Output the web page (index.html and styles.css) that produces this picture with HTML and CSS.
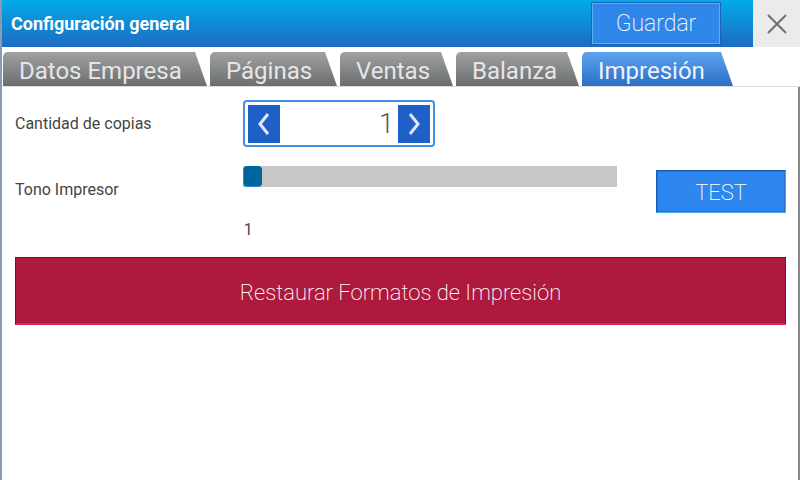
FILE: index.html
```html
<!DOCTYPE html>
<html lang="es">
<head>
<meta charset="utf-8">
<title>Configuración general</title>
<link rel="stylesheet" href="styles.css">
</head>
<body>
<div class="app">
  <header class="header">
    <div class="titlebar">
      <h1 class="title">Configuración general</h1>
      <button class="btn-save">Guardar</button>
    </div>
    <button class="btn-close" aria-label="Cerrar">
      <svg width="20" height="20" viewBox="0 0 20 20"><path d="M1 1 L19 19 M19 1 L1 19" stroke="#707070" stroke-width="2" fill="none"/></svg>
    </button>
  </header>
  <nav class="tabs">
    <div class="tab tab-1">Datos Empresa</div>
    <div class="tab tab-2">Páginas</div>
    <div class="tab tab-3">Ventas</div>
    <div class="tab tab-4">Balanza</div>
    <div class="tab tab-5 active">Impresión</div>
  </nav>
  <main class="content">
    <div class="row row-copies">
      <div class="label">Cantidad de copias</div>
      <div class="spinner">
        <button class="spin-btn" aria-label="Menos">
          <svg width="14" height="24" viewBox="0 0 14 24"><path d="M11 2 L3 12 L11 22" stroke="#e4e8f4" stroke-width="3" fill="none"/></svg>
        </button>
        <div class="spin-value">1</div>
        <button class="spin-btn" aria-label="Más">
          <svg width="14" height="24" viewBox="0 0 14 24"><path d="M3 2 L11 12 L3 22" stroke="#e4e8f4" stroke-width="3" fill="none"/></svg>
        </button>
      </div>
    </div>
    <div class="row row-tone">
      <div class="label label-tone">Tono Impresor</div>
      <div class="tone-col">
        <div class="slider"><div class="thumb"></div></div>
        <div class="tone-value">1</div>
      </div>
      <button class="btn-test">TEST</button>
    </div>
    <button class="btn-restore">Restaurar Formatos de Impresión</button>
  </main>
</div>
</body>
</html>
```
FILE: styles.css
```css
* { box-sizing: border-box; }
html, body { margin: 0; padding: 0; }
body {
  width: 800px;
  height: 480px;
  overflow: hidden;
  background: #ffffff;
  font-family: Roboto, "Liberation Sans", sans-serif;
}
button { font-family: inherit; cursor: pointer; }
.app {
  height: 480px;
  border-left: 2px solid #8a9bb0;
  display: flex;
  flex-direction: column;
}
.header {
  display: flex;
  height: 47px;
}
.titlebar {
  flex: 1;
  display: flex;
  align-items: center;
  justify-content: space-between;
  padding-left: 9px;
  padding-right: 32px;
  background: linear-gradient(#00aaea, #1e6bc1);
}
.title {
  margin: 0;
  color: #ffffff;
  font-size: 18px;
  font-weight: 700;
}
.btn-save {
  width: 130px;
  height: 43px;
  background: #2f87ea;
  border: 1px solid #1d63b8;
  box-shadow: 0 0 0 1px #52b4f2 inset;
  color: #ffffff;
  font-size: 23px;
  font-weight: 200;
  padding: 0;
}
.btn-close {
  width: 47px;
  border: 0;
  background: #ebebeb;
  display: flex;
  align-items: center;
  justify-content: center;
  padding: 0;
}
.tabs {
  display: flex;
  margin-top: 5px;
  height: 35px;
  padding-left: 1px;
  gap: 3px;
  border-bottom: 1px solid #dedede;
}
.tab {
  height: 34px;
  padding: 4px 0 0 16px;
  color: #e6e6e6;
  font-size: 24px;
  line-height: 30px;
  background: linear-gradient(#a0a0a0, #6a6e70);
  border-radius: 5px 6px 0 0;
  clip-path: polygon(0 0, calc(100% - 12px) 0, 100% 100%, 0 100%);
  white-space: nowrap;
}
.tab-1 { width: 204px; }
.tab-2 { width: 127px; }
.tab-3 { width: 113px; }
.tab-4 { width: 123px; }
.tab-5 { width: 151px; }
.tab.active {
  background: linear-gradient(#5ea3ef, #2a6fc7);
  color: #eef2fa;
}
.content {
  flex: 1;
  border-right: 2px solid #888888;
  padding: 13px 12px 0 13px;
  display: flex;
  flex-direction: column;
}
.row {
  display: flex;
}
.label {
  width: 228px;
  font-size: 16px;
  color: #444444;
  align-self: center;
}
.spinner {
  width: 192px;
  height: 47px;
  border: 2px solid #3f8fe6;
  border-radius: 4px;
  padding: 2px 3px;
  display: flex;
  align-items: center;
}
.spin-btn {
  width: 32px;
  height: 38px;
  border: 0;
  padding: 0;
  background: #1f5fc8;
  display: flex;
  align-items: center;
  justify-content: center;
}
.spin-value {
  flex: 1;
  text-align: right;
  padding-right: 4px;
  font-size: 27px;
  font-weight: 300;
  color: #555555;
}
.row-tone {
  margin-top: 19px;
  align-items: flex-start;
}
.label-tone {
  align-self: flex-start;
  margin-top: 14px;
}
.tone-col {
  width: 375px;
  display: flex;
  flex-direction: column;
}
.slider {
  height: 21px;
  background: #c6c7c6;
}
.thumb {
  width: 19px;
  height: 21px;
  background: #00659a;
  border-radius: 4px;
  border-left: 1px solid #2a8ad8;
  border-bottom: 1px solid #2a8ad8;
}
.tone-value {
  margin-top: 33px;
  padding-left: 1px;
  font-size: 16px;
  color: #444444;
}
.btn-test {
  margin-left: 39px;
  margin-top: 4px;
  width: 130px;
  height: 43px;
  padding: 2px 0 0;
  background: #2e87ee;
  border: 1px solid #1a5eb4;
  border-bottom-color: #4aa8f0;
  border-right-color: #4aa8f0;
  box-shadow: 0 0 0 1px #2472d0 inset;
  color: #ffffff;
  font-size: 22px;
  font-weight: 200;
}
.btn-restore {
  margin-top: 18px;
  width: 771px;
  height: 68px;
  padding: 4px 0 0;
  background: #ae1a3d;
  border: 1px solid #7d0c2a;
  border-bottom: 2px solid #e3224c;
  color: #ffffff;
  font-size: 22px;
  font-weight: 200;
}
```
